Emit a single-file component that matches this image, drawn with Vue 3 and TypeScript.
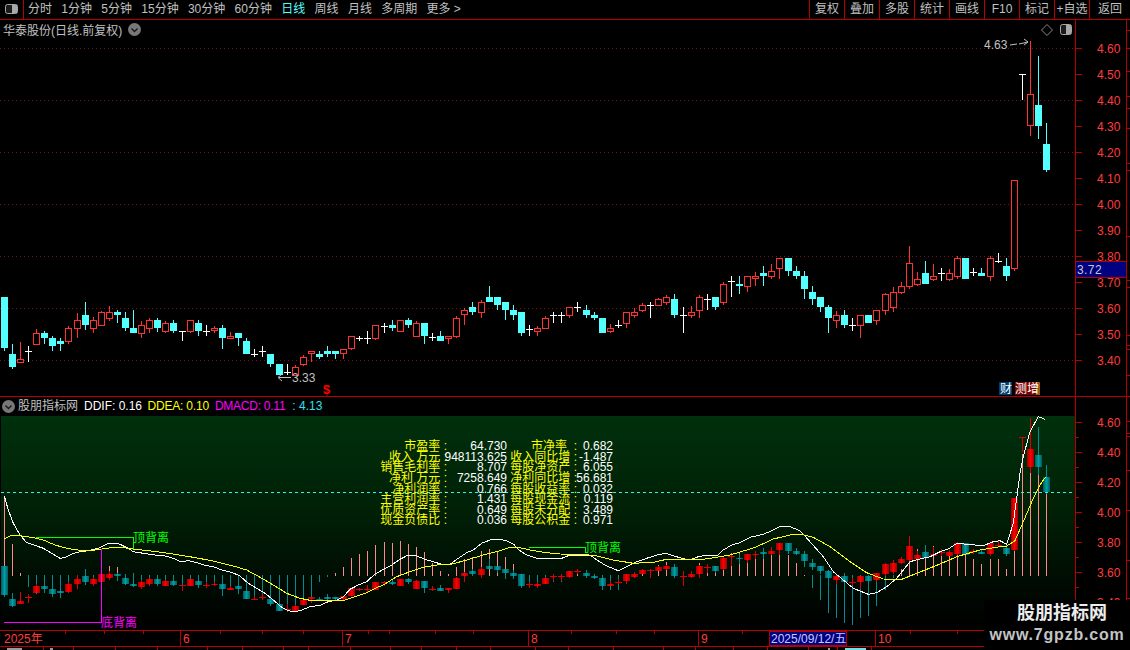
<script setup lang="ts">
type Kind = 'r' | 'c' | 'w'
type Row = [number, number, number, number, Kind]

const navItems = ['分时', '1分钟', '5分钟', '15分钟', '30分钟', '60分钟', '日线', '周线', '月线', '多周期', '更多 >']
const toolItems = ['复权', '叠加', '多股', '统计', '画线', 'F10', '标记', '+自选', '返回']

const part = (base: number, rows: Row[]): Row[] =>
  rows.map(([t, a, b, m, k]) => [base + t / 3, base + a / 3, base + b / 3, base + m / 3, k] as Row)

const rows: Row[] = [
  ...part(280, [
    [52, 52, 205, 212, 'c'], [192, 222, 260, 266, 'c'], [186, 238, 248, 248, 'r'], [198, 214, 214, 246, 'w'],
    [148, 160, 194, 196, 'r'], [153, 160, 174, 192, 'c'], [168, 174, 198, 213, 'c'], [174, 183, 192, 213, 'c'],
    [138, 144, 185, 191, 'r'], [99, 121, 146, 174, 'r'], [66, 105, 135, 150, 'c'], [110, 121, 147, 159, 'r'],
    [93, 97, 137, 137, 'r'], [78, 97, 116, 124, 'r'], [90, 96, 105, 130, 'c'], [96, 114, 144, 152, 'c'],
    [90, 144, 159, 159, 'c'], [123, 136, 162, 174, 'r'], [114, 121, 147, 159, 'r'], [114, 121, 144, 156, 'c'],
    [124, 130, 156, 158, 'r'], [120, 129, 153, 159, 'c'], [154, 154, 154, 183, 'w'], [121, 121, 156, 159, 'r'],
    [120, 129, 153, 168, 'c'], [135, 153, 153, 168, 'w'], [139, 145, 154, 159, 'r'], [136, 144, 174, 207, 'c'],
    [156, 169, 176, 177, 'r'], [159, 159, 174, 198, 'c'], [174, 183, 222, 222, 'c'], [207, 222, 222, 231, 'w'],
    [198, 213, 213, 231, 'w'], [222, 222, 252, 260, 'c'], [252, 252, 285, 285, 'c'], [252, 276, 276, 285, 'w'],
    [255, 262, 288, 288, 'r'], [225, 232, 255, 258, 'r'], [212, 214, 223, 246, 'r'], [213, 222, 231, 237, 'c'],
    [198, 213, 222, 231, 'c'], [213, 213, 222, 237, 'c'], [207, 208, 223, 237, 'r'], [168, 169, 208, 210, 'r'],
    [168, 175, 175, 183, 'w'], [153, 174, 174, 192, 'w'], [135, 135, 176, 181, 'r'],
  ]),
  ...part(270, [
    [159, 168, 168, 189, 'w'], [150, 165, 174, 183, 'c'], [150, 151, 185, 185, 'r'], [144, 150, 165, 174, 'c'],
    [153, 160, 200, 201, 'r'], [159, 159, 198, 222, 'c'], [189, 201, 201, 213, 'w'], [183, 198, 213, 213, 'c'],
    [198, 199, 207, 222, 'r'], [138, 144, 201, 204, 'r'], [114, 120, 136, 165, 'r'], [96, 111, 126, 135, 'c'],
    [90, 97, 128, 144, 'r'], [48, 81, 96, 96, 'c'], [81, 81, 105, 120, 'c'], [96, 96, 120, 150, 'c'],
    [105, 120, 135, 150, 'c'], [126, 126, 189, 198, 'c'], [165, 177, 177, 198, 'w'], [168, 175, 185, 198, 'r'],
    [138, 144, 176, 177, 'r'], [126, 135, 135, 159, 'w'], [126, 135, 135, 159, 'w'], [111, 111, 137, 144, 'r'],
    [96, 111, 111, 126, 'w'], [105, 120, 135, 144, 'c'], [126, 135, 144, 150, 'c'], [144, 144, 189, 189, 'c'],
    [162, 175, 185, 189, 'r'], [150, 165, 165, 174, 'w'], [126, 127, 161, 174, 'r'], [114, 127, 137, 144, 'r'],
    [99, 106, 122, 126, 'r'], [96, 105, 105, 144, 'w'], [84, 88, 107, 108, 'r'], [75, 82, 98, 105, 'r'],
    [72, 87, 135, 144, 'c'], [111, 135, 135, 189, 'w'], [108, 127, 137, 144, 'r'], [75, 82, 122, 144, 'r'],
    [72, 88, 88, 120, 'w'], [81, 81, 111, 120, 'c'], [36, 43, 98, 105, 'r'], [18, 34, 34, 81, 'w'],
    [18, 42, 48, 72, 'c'],
  ]),
  ...part(230, [
    [139, 139, 170, 186, 'r'], [126, 139, 148, 168, 'r'], [108, 129, 138, 168, 'c'], [102, 124, 140, 147, 'r'],
    [84, 85, 116, 147, 'r'], [84, 84, 123, 138, 'c'], [108, 123, 138, 147, 'c'], [123, 138, 177, 207, 'c'],
    [168, 186, 207, 225, 'c'], [201, 201, 231, 246, 'c'], [225, 231, 264, 309, 'c'], [243, 256, 272, 294, 'r'],
    [240, 255, 285, 294, 'c'], [264, 285, 285, 303, 'w'], [255, 256, 288, 324, 'r'], [255, 255, 279, 279, 'c'],
    [240, 241, 272, 285, 'r'], [190, 193, 243, 255, 'r'], [171, 187, 233, 246, 'r'], [156, 169, 189, 192, 'r'],
    [48, 100, 170, 177, 'r'], [126, 148, 164, 168, 'r'], [93, 129, 162, 162, 'c'], [102, 139, 150, 153, 'r'],
    [114, 129, 129, 153, 'w'], [117, 130, 150, 153, 'r'], [78, 85, 141, 147, 'r'], [84, 84, 147, 147, 'c'],
    [114, 126, 126, 138, 'w'], [114, 129, 138, 138, 'c'], [78, 85, 140, 153, 'r'], [69, 93, 93, 99, 'w'],
    [84, 108, 138, 153, 'c'],
  ]),
  ...part(0, [
    [540, 540, 806, 812, 'r'], [222, 222, 222, 300, 'w'], [122, 283, 379, 408, 'r'], [168, 316, 378, 417, 'c'],
    [369, 432, 510, 516, 'c'],
  ]),
]

const colX = (i: number): number => Math.floor(4.3 + i * 8.08)
const toLow = (y: number): number => 422 + (y - 48) * 0.577

interface Candle {
  id: number
  px: number
  top: number
  bodyTop: number
  bodyBottom: number
  bottom: number
  kind: Kind
  height: number
}

const candles: Candle[] = rows.map((r, i) => ({
  id: i,
  px: colX(i),
  top: Math.round(r[0]),
  bodyTop: Math.round(r[1]),
  bodyBottom: Math.round(r[2]),
  bottom: Math.round(r[3]),
  kind: r[4],
  height: Math.round(r[2]) - Math.round(r[1]),
}))

const mainColor: Record<Kind, string> = { r: '#ff3232', c: '#54ffff', w: '#ffffff' }

const lowCandles = candles.map((c) => {
  const bt = Math.round(toLow(c.bodyTop))
  const bb = Math.round(toLow(c.bodyBottom))
  return {
    id: c.id,
    px: c.px,
    top: Math.round(toLow(c.top)),
    bottom: Math.round(toLow(c.bottom)),
    bt,
    h: Math.max(bb - bt, 1),
    color: c.kind === 'c' ? '#008c92' : '#e00000',
    fill: c.height === 0 ? '#e00000' : c.kind === 'c' ? 'url(#tealBody)' : 'url(#redBody)',
  }
})

const barValues: number[] = [
  80, 32, 3, -12, -19, -17, -21, -23, -17, -14, -8, -5, -1, 10, 9, 2, -12, -13, -11, -10, -9, -8, -15, -10, -12,
  -12, -10, -20, -15, -19, -24, -25, -24, -31, -36, -37, -36, -29, -26, -7, -2, 3, 9, 18, 22, 25, 31, 34, 33, 35,
  32, 29, 24, 13, 5, 2, 9, 17, 19, 25, 27, 25, 19, 12, -12, -12, -12, -9, -7, -7, 1, 2, -2, -2, -15, -15, -15, -9,
  4, 6, 6, 11, 14, 8, 0, 4, 13, 11, 8, 16, 23, 23, 21, 24, 26, 29, 26, 21, 13, 1, -13, -25, -38, -43, -48, -50,
  -43, -41, -31, -15, -3, 7, 24, 27, 31, 30, 27, 24, 22, 21, 17, 12, 17, 17, 7, 32, 122, 150, 146, 111,
]
const bars = barValues.map((v, i) => ({
  id: i,
  x: colX(i),
  y: v >= 0 ? 576 - v : 575,
  h: Math.max(Math.abs(v), 1),
  color: v >= 0 ? '#ff8a8a' : '#008c92',
}))

const trace = (x0: number, y0: number, list: number[][]): string[] =>
  list.map(([x, y]) => `${(x0 + x / 3).toFixed(1)},${(y0 + y / 3).toFixed(1)}`)

const whiteLine = [
  ...trace(0, 490, [[13,18],[25,60],[40,100],[60,135],[80,158],[110,168],[130,175],[155,190],[180,205],[195,203],[215,192],[240,185],[265,182],[295,175],[320,162],[345,159],[360,163],[385,175],[400,185],[430,190],[465,195],[495,198],[520,205],[540,215],[565,212],[590,218],[615,226],[640,230],[665,240],[695,247],[720,258],[745,280],[770,295],[795,310],[820,330],[845,352],[865,362],[885,366],[905,360],[930,350],[960,346],[985,335],[1010,330],[1030,320],[1050,298],[1075,285],[1100,275],[1125,252]]),
  ...trace(370, 520, [[20,160],[40,148],[65,135],[90,118],[115,105],[140,108],[165,118],[190,125],[215,133],[240,133],[265,115],[290,98],[310,90],[335,70],[360,60],[385,57],[410,62],[430,72],[450,92],[470,105],[500,115],[535,116],[575,115],[600,105],[630,105],[660,105],[680,120],[710,138],[745,152],[770,140],[800,125],[830,115],[860,105],[888,100],[910,107],[935,115],[960,120],[985,110],[1015,105],[1040,108],[1060,90],[1085,75],[1110,68]]),
  ...trace(740, 400, [[30,412],[70,403],[100,390],[120,380],[150,380],[180,392],[210,425],[250,470],[280,515],[310,540],[340,565],[385,583],[410,578],[440,560],[470,535],[490,510],[510,485],[540,477],[570,470],[600,455],[625,447],[650,430],[680,433],[730,437],[760,425],[780,422],[800,433],[820,370],[840,220],[850,170],[870,95],[895,50],[915,58]]),
].join(' ')

const yellowLine = [
  ...trace(0, 490, [[13,147],[35,135],[60,137],[100,143],[130,150],[165,165],[200,175],[240,181],[270,182],[300,178],[340,172],[370,173],[400,177],[460,184],[520,192],[580,202],[640,213],[700,228],[740,240],[780,262],[820,285],[860,310],[900,325],[930,331],[970,332],[1030,332],[1060,322],[1100,308],[1130,293]]),
  ...trace(370, 520, [[40,195],[80,170],[120,155],[160,142],[200,135],[240,134],[290,120],[340,105],[380,95],[420,82],[445,82],[480,90],[520,97],[570,102],[640,103],[680,108],[730,120],[790,130],[850,127],[890,118],[950,118],[1000,118],[1040,112],[1080,105],[1130,90]]),
  ...trace(740, 400, [[50,440],[100,417],[150,405],[180,402],[220,412],[270,440],[330,485],[380,518],[430,537],[485,538],[530,520],[600,492],[650,470],[720,450],[780,440],[800,438],[825,422],[850,365],[880,295],[900,255],[917,230]]),
].join(' ')

const gridLines = [48, 100, 152, 204, 256, 308, 360]
const mainAxis = ['4.60','4.50','4.40','4.30','4.20','4.10','4.00','3.90','3.80','3.70','3.60','3.50','3.40'].map((t, i) => ({
  text: t,
  y: Math.round(48 + i * 26),
}))
const lowAxis = ['4.60','4.40','4.20','4.00','3.80','3.60','3.40'].map((t, i) => ({
  text: t,
  y: Math.round(422 + i * 30),
}))

const farTicks = [30, 48, 71, 96, 108, 128, 163, 170, 236, 280, 287, 335, 345, 349, 375]
const lowFarTicks = [421, 433, 436, 470, 510, 560, 598]

const fundamentals = [
  ['市盈率 :', '64.730', '市净率  :', '0.682'],
  ['收入 万元 :', '948113.625', '收入同比增 :', '-1.487'],
  ['销售毛利率 :', '8.707', '每股净资产 :', '6.055'],
  ['净利 万元 :', '7258.649', '净利同比增 :', '56.681'],
  ['净利润率 :', '0.766', '每股收益率 :', '0.032'],
  ['主营利润率 :', '1.431', '每股现金流 :', '0.119'],
  ['优质资产率 :', '0.649', '每股未分配 :', '3.489'],
  ['现金负债比 :', '0.036', '每股公积金 :', '0.971'],
]

const monthMarks = [
  { label: '6', x: 180 },
  { label: '7', x: 342 },
  { label: '8', x: 528 },
  { label: '9', x: 698 },
  { label: '10', x: 875 },
]
const upperTicks = [65, 104, 143, 220, 262, 303, 368, 389, 435, 473, 571, 616, 654, 742, 785, 910, 957, 1010, 1040]
const lowerTicks = [43, 73, 115, 157, 207, 242, 283, 308, 350, 390, 421, 456, 490, 535, 568, 613, 663, 695, 733, 767, 808, 837, 871]
</script>

<template>
  <div class="screen">
    <header class="toolbar">
      <div class="panel-toggle">
        <svg width="14" height="11" viewBox="0 0 14 11" class="toggle-icon">
          <rect x="0.5" y="0.5" width="12" height="9" rx="2" fill="#1c1c1c" stroke="#a8a8a8" />
          <rect x="7" y="1" width="5" height="8" fill="#a8a8a8" />
        </svg>
      </div>
      <nav class="nav">
        <span v-for="item in navItems" :key="item" class="nav-item" :class="{ active: item === '日线' }">{{ item }}</span>
      </nav>
      <div class="tools">
        <span v-for="item in toolItems" :key="item" class="tool" :class="{ last: item === '返回' }">{{ item }}</span>
      </div>
    </header>

    <section class="main-pane">
      <svg class="chart" width="1130" height="376" viewBox="0 20 1130 376">
        <g class="crisp">
          <line v-for="y in gridLines" :key="y" x1="0" x2="1075" :y1="y + 0.5" :y2="y + 0.5" stroke="#741616" stroke-dasharray="1 3" />
          <template v-for="c in candles" :key="c.id">
            <template v-if="c.kind === 'r'">
              <rect :x="c.px" :y="c.top" width="1" :height="Math.max(c.bodyTop - c.top, 0)" fill="#ff3232" />
              <rect :x="c.px" :y="c.bodyBottom" width="1" :height="Math.max(c.bottom - c.bodyBottom, 0)" fill="#ff3232" />
              <rect :x="c.px - 2.5" :y="c.bodyTop + 0.5" width="6" :height="Math.max(c.height - 1, 1)" fill="#000" stroke="#ff3232" />
            </template>
            <template v-else>
              <rect :x="c.px" :y="c.top" width="1" :height="c.bottom - c.top" :fill="mainColor[c.kind]" />
              <rect :x="c.px - 3" :y="c.bodyTop" width="7" :height="Math.max(c.height, 1)" :fill="mainColor[c.kind]" />
            </template>
          </template>
          <rect x="1075" y="20" width="1" height="376" fill="#b40000" />
          <rect x="1126" y="20" width="1" height="376" fill="#b40000" />
          <rect v-for="t in mainAxis" :key="t.text" x="1076" :y="t.y" width="6" height="1" fill="#b40000" />
          <rect v-for="y in farTicks" :key="y" x="1127" :y="y" width="3" height="1" fill="#b40000" />
          <rect x="1076" y="262" width="50" height="15" fill="#000080" />
          <rect x="1076" y="261" width="50" height="1" fill="#b40000" />
          <rect x="1076" y="277" width="50" height="1" fill="#b40000" />
          <rect x="999" y="382" width="13" height="13" fill="#003c70" />
          <rect x="1015" y="382" width="25" height="13" fill="#7c0000" />
          <rect x="1036" y="382" width="4" height="13" fill="#9a5a10" />
        </g>

        <text v-for="t in mainAxis" :key="t.text" x="1097" :y="t.y + 5" class="axis-label">{{ t.text }}</text>
        <text x="1077" y="274" class="price-tag">3.72</text>

        <text x="984" y="49" class="extreme">4.63</text>
        <path d="M1010 45 L1017 44 M1019 44 L1028 42 M1024 39 L1028 42 L1024 45" class="arrow" />
        <text x="292" y="382" class="extreme">3.33</text>
        <path d="M291 377.5 L279 377.5 M282 374 L278 377.5 L282 381" class="arrow" />

        <text x="323" y="394" class="dollar">$</text>
        <text x="1000" y="393" class="badge">财</text>
        <text x="1015" y="393" class="badge">测增</text>

        <g class="diamond">
          <path d="M1047 24.5 L1052.5 30 L1047 35.5 L1041.5 30 Z" />
        </g>
        <rect x="1060.5" y="24.5" width="11" height="10" rx="2" fill="#1c1c1c" stroke="#a8a8a8" />
        <rect x="1066" y="25" width="5" height="9" fill="#a8a8a8" />
      </svg>

      <div class="title-row">
        <span>华泰股份(日线.前复权)</span>
        <svg width="13" height="13" viewBox="0 0 13 13" class="chev">
          <circle cx="6.5" cy="6.5" r="6.5" fill="#787878" />
          <path d="M3.5 5.5 L6.5 8.5 L9.5 5.5" fill="none" stroke="#1a1a1a" stroke-width="1.4" />
        </svg>
      </div>
    </section>

    <section class="low-pane">
      <div class="low-head">
        <div class="legend">
          <svg width="13" height="13" viewBox="0 0 13 13" class="chev-low">
            <circle cx="6.5" cy="6.5" r="6.5" fill="#787878" />
            <path d="M3.5 5.5 L6.5 8.5 L9.5 5.5" fill="none" stroke="#1a1a1a" stroke-width="1.4" />
          </svg>
          <span class="legend-name">股朋指标网</span>
          <span class="l-white">DDIF: 0.16</span>
          <span class="l-yellow">DDEA: 0.10</span>
          <span class="l-magenta">DMACD: 0.11</span>
          <span class="l-cyan">: 4.13</span>
        </div>
        <div class="head-axis"></div>
      </div>

      <div class="low-body">
        <svg class="chart" width="1130" height="214" viewBox="0 416 1130 214">
          <defs>
            <linearGradient id="lowBg" x1="0" y1="0" x2="0" y2="1">
              <stop offset="0" stop-color="#00300c" />
              <stop offset="0.45" stop-color="#002006" />
              <stop offset="0.8" stop-color="#000a02" />
              <stop offset="1" stop-color="#000000" />
            </linearGradient>
            <linearGradient id="redBody" x1="0" y1="0" x2="1" y2="0">
              <stop offset="0" stop-color="#a00000" />
              <stop offset="0.5" stop-color="#ff0000" />
              <stop offset="1" stop-color="#a00000" />
            </linearGradient>
            <linearGradient id="tealBody" x1="0" y1="0" x2="1" y2="0">
              <stop offset="0" stop-color="#005a60" />
              <stop offset="0.5" stop-color="#00a0a4" />
              <stop offset="1" stop-color="#005a60" />
            </linearGradient>
          </defs>
          <rect x="1" y="416" width="1074" height="214" fill="url(#lowBg)" />
          <g class="crisp">
            <rect v-for="b in bars" :key="b.id" :x="b.x" :y="b.y" width="1" :height="b.h" :fill="b.color" />
            <template v-for="c in lowCandles" :key="c.id">
              <rect :x="c.px" :y="c.top" width="1" :height="c.bottom - c.top" :fill="c.color" />
              <rect :x="c.px - 3" :y="c.bt" width="7" :height="c.h" :fill="c.fill" />
            </template>
            <line x1="1" x2="1075" y1="492.5" y2="492.5" stroke="#30f0f0" stroke-dasharray="3 3" />
            <polyline :points="whiteLine" fill="none" stroke="#ffffff" />
            <polyline :points="yellowLine" fill="none" stroke="#ffff00" />
            <path d="M36 537.5 H133.5 V549" fill="none" stroke="#00ff00" />
            <path d="M529 547.5 H585.5 V553" fill="none" stroke="#00ff00" />
            <path d="M4 622.5 H101.5 V549" fill="none" stroke="#ff00ff" />
            <rect x="1075" y="416" width="1" height="214" fill="#b40000" />
            <rect x="1126" y="416" width="1" height="214" fill="#b40000" />
            <rect v-for="t in lowAxis" :key="t.text" x="1076" :y="t.y" width="6" height="1" fill="#b40000" />
            <rect v-for="t in lowAxis" :key="'m' + t.text" x="1076" :y="t.y + 15" width="3" height="1" fill="#b40000" />
            <rect v-for="y in lowFarTicks" :key="y" x="1127" :y="y" width="3" height="1" fill="#b40000" />
          </g>
          <text x="133" y="542" class="note-green">顶背离</text>
          <text x="585" y="552" class="note-green">顶背离</text>
          <text x="101" y="627" class="note-magenta">底背离</text>
          <text v-for="t in lowAxis" :key="t.text" x="1097" :y="t.y + 5" class="axis-label">{{ t.text }}</text>
        </svg>

        <div class="fundamentals">
          <template v-for="row in fundamentals" :key="row[0]">
            <span class="f-label">{{ row[0] }}</span>
            <span class="f-value">{{ row[1] }}</span>
            <span class="f-label">{{ row[2] }}</span>
            <span class="f-value">{{ row[3] }}</span>
          </template>
        </div>
      </div>
    </section>

    <footer class="time-axis">
      <svg class="chart" width="1130" height="20" viewBox="0 630 1130 20">
        <g class="crisp">
          <rect x="0" y="630" width="1130" height="1" fill="#b40000" />
          <rect x="0" y="646" width="1130" height="1" fill="#b40000" />
          <rect v-for="x in upperTicks" :key="x" :x="x" y="631" width="1" height="3" fill="#b40000" />
          <rect v-for="x in lowerTicks" :key="x" :x="x" y="647" width="1" height="3" fill="#b40000" />
          <rect v-for="m in monthMarks" :key="m.label" :x="m.x" y="631" width="1" height="15" fill="#b40000" />
          <rect x="1075" y="630" width="1" height="20" fill="#b40000" />
          <rect x="769.5" y="631.5" width="77" height="14" fill="#000080" stroke="#b40000" />
          <rect x="7" y="648" width="15" height="2" fill="#9a9a9a" />
          <rect x="50" y="648" width="3" height="2" fill="#9a9a9a" />
          <rect x="828" y="648" width="2" height="2" fill="#9a9a9a" />
          <rect x="845" y="648" width="21" height="2" fill="#70e0e0" />
        </g>
        <text x="4" y="643" class="time-label">2025年</text>
        <text v-for="m in monthMarks" :key="m.label" :x="m.x + 3" y="643" class="time-label">{{ m.label }}</text>
        <text x="771" y="643" class="date-tag">2025/09/12/五</text>
      </svg>
    </footer>

    <aside class="watermark">
      <div class="wm-name">股朋指标网</div>
      <div class="wm-url">www.7gpzb.com</div>
    </aside>
  </div>
</template>

<style>
html, body { margin: 0; background: #000; }
</style>

<style scoped>
.screen {
  position: relative;
  width: 1130px;
  height: 650px;
  background: #000;
  overflow: hidden;
  display: flex;
  flex-direction: column;
  font-family: "Liberation Sans", "Noto Sans CJK SC", sans-serif;
  font-size: 12px;
  color: #c0c0c0;
}
.toolbar {
  height: 19px;
  flex: none;
  display: flex;
  align-items: stretch;
  border-bottom: 1px solid #b40000;
  line-height: 19px;
}
.panel-toggle {
  width: 23px;
  flex: none;
  border-right: 1px solid #b40000;
  display: flex;
  align-items: center;
  justify-content: center;
}
.toggle-icon { display: block; }
.nav {
  display: flex;
  gap: 9.3px;
  padding-left: 4px;
  flex: 1;
  white-space: nowrap;
}
.nav-item.active { color: #54ffff; }
.tools { display: flex; }
.tool {
  width: 34px;
  text-align: center;
  border-left: 1px solid #b40000;
  white-space: nowrap;
}
.tool.last { width: 40px; }

.main-pane {
  position: relative;
  height: 376px;
  flex: none;
  border-bottom: 1px solid #b40000;
}
.chart { display: block; }
.crisp { shape-rendering: crispEdges; }
.title-row {
  position: absolute;
  left: 3px;
  top: 0;
  height: 18px;
  display: flex;
  align-items: center;
  gap: 6px;
  white-space: nowrap;
}
.chev { display: block; }
.axis-label { fill: #ff3c3c; font-size: 12px; }
.price-tag { fill: #c8c8c8; font-size: 12px; letter-spacing: 0.4px; }
.extreme { fill: #c0c0c0; font-size: 12px; }
.arrow { fill: none; stroke: #c0c0c0; }
.dollar { fill: #ff0000; font-size: 13px; font-weight: 700; }
.badge { fill: #ffffff; font-size: 12px; }
.diamond path { fill: none; stroke: #8a8a8a; }

.low-pane { flex: none; height: 233px; display: flex; flex-direction: column; }
.low-head { display: flex; height: 19px; flex: none; line-height: 17px; }
.legend {
  width: 1075px;
  flex: none;
  display: flex;
  align-items: center;
  white-space: nowrap;
  padding-left: 2px;
  box-sizing: border-box;
}
.chev-low { display: block; flex: none; margin-right: 3px; }
.legend-name { margin-right: 6px; }
.l-white { color: #fff; margin-right: 5.5px; }
.l-yellow { color: #ffff00; margin-right: 6px; letter-spacing: -0.2px; }
.l-magenta { color: #ff00ff; margin-right: 7px; letter-spacing: -0.25px; }
.l-cyan { color: #30e0f0; }
.head-axis {
  width: 50px;
  flex: none;
  border-left: 1px solid #b40000;
  border-right: 1px solid #b40000;
}
.low-body { position: relative; height: 214px; flex: none; }
.note-green { fill: #00ff00; font-size: 12px; }
.note-magenta { fill: #ff00ff; font-size: 12px; }
.fundamentals {
  position: absolute;
  left: 380px;
  top: 25px;
  display: grid;
  grid-template-columns: 67px 60px 70px 36px;
  grid-auto-rows: 10.65px;
  line-height: 10.65px;
  white-space: pre;
}
.f-label {
  color: #ffff00;
  display: flex;
  justify-content: flex-end;
}
.f-value {
  color: #fff;
  display: flex;
  justify-content: flex-end;
}

.time-axis { flex: none; height: 20px; }
.time-label { fill: #ff3c3c; font-size: 12px; }
.date-tag { fill: #c8c8ff; font-size: 12px; }

.watermark {
  position: absolute;
  left: 984px;
  top: 600px;
  width: 146px;
  height: 50px;
  background: #000;
  text-align: center;
  font-weight: 700;
  padding-top: 1px;
  box-sizing: border-box;
}
.wm-name { font-size: 18px; color: #ececec; line-height: 24px; padding-left: 10px; }
.wm-url { font-size: 16px; color: #c4c4c4; letter-spacing: 0.8px; line-height: 19px; }
</style>
